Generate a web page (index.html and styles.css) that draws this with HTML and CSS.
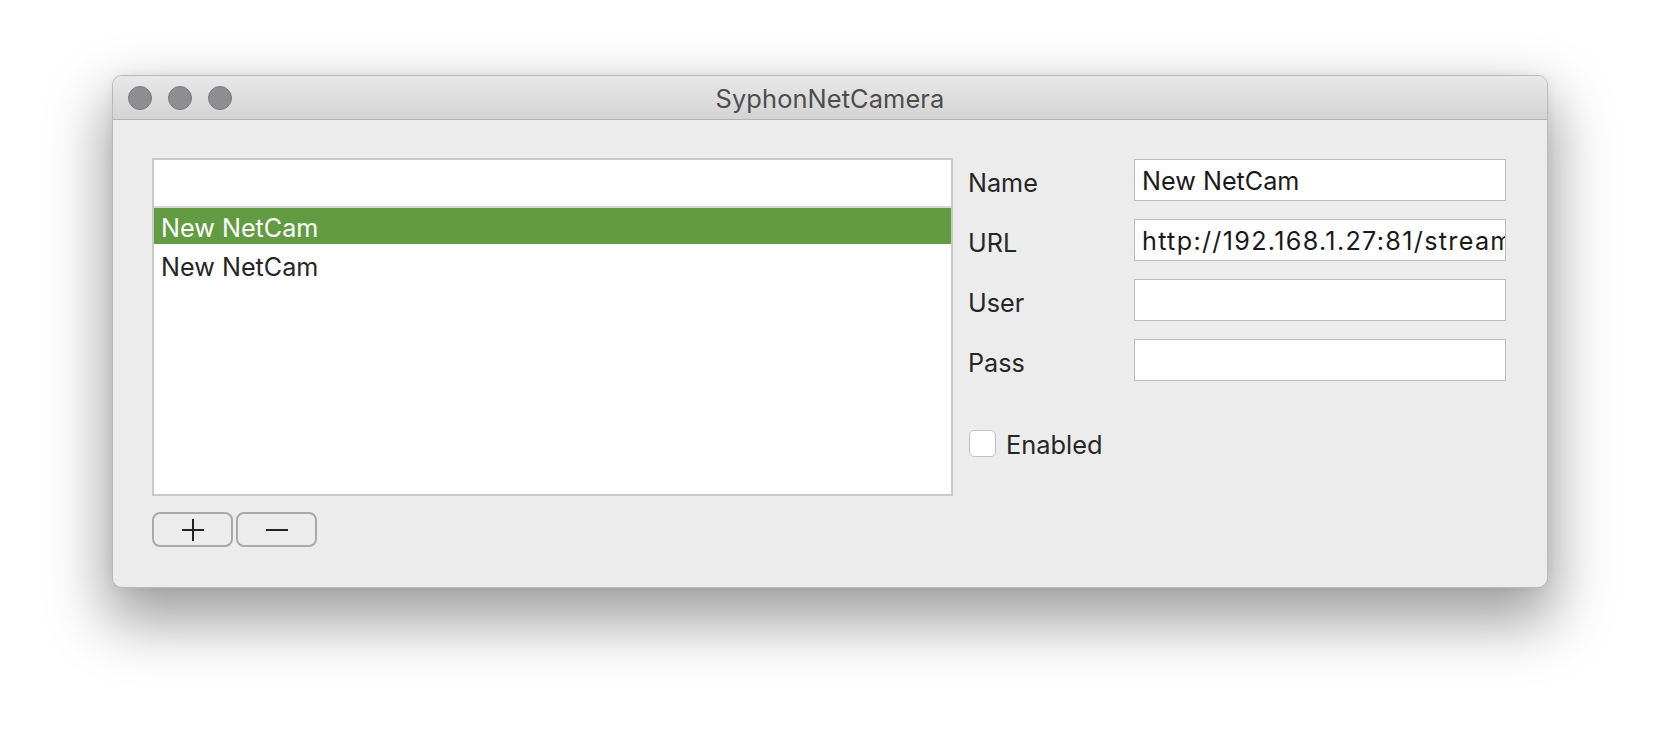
FILE: index.html
```html
<!DOCTYPE html>
<html lang="en">
<head>
<meta charset="utf-8">
<title>SyphonNetCamera</title>
<link rel="stylesheet" href="styles.css">
</head>
<body>
<div class="window">
  <div class="titlebar">
    <div class="lights">
      <span class="light"></span>
      <span class="light"></span>
      <span class="light"></span>
    </div>
    <div class="title">SyphonNetCamera</div>
  </div>
  <div class="content">
    <div class="left">
      <div class="list">
        <div class="list-header"></div>
        <div class="row selected">New NetCam</div>
        <div class="row">New NetCam</div>
      </div>
      <div class="buttons">
        <button class="btn" type="button"><span class="plus"></span></button>
        <button class="btn" type="button"><span class="minus"></span></button>
      </div>
    </div>
    <div class="right">
      <div class="form">
        <div class="label">Name</div>
        <div class="field">New NetCam</div>
        <div class="label">URL</div>
        <div class="field url">http://192.168.1.27:81/stream</div>
        <div class="label">User</div>
        <div class="field"></div>
        <div class="label">Pass</div>
        <div class="field"></div>
      </div>
      <label class="check">
        <span class="box"></span>
        <span class="check-text">Enabled</span>
      </label>
    </div>
  </div>
</div>
</body>
</html>
```
FILE: styles.css
```css
html, body {
  margin: 0;
  padding: 0;
}
body {
  width: 1660px;
  height: 736px;
  background: #ffffff;
  font-family: "Inter", "Liberation Sans", sans-serif;
  overflow: hidden;
}
.window {
  margin: 75px 0 0 112px;
  width: 1434px;
  height: 511px;
  border: 1px solid #b9b9b9;
  border-radius: 10px;
  background: #ececec;
  box-shadow: 0 28px 60px 6px rgba(0, 0, 0, 0.38), 0 0 12px rgba(0, 0, 0, 0.06);
  overflow: hidden;
  display: flex;
  flex-direction: column;
}
.titlebar {
  height: 43px;
  flex: none;
  display: flex;
  align-items: center;
  justify-content: center;
  position: relative;
  background: linear-gradient(#e9e8e9, #d3d3d3);
  border-bottom: 1px solid #b3b3b3;
}
.lights {
  position: absolute;
  left: 15px;
  top: 10px;
  display: flex;
  gap: 16px;
}
.light {
  width: 22px;
  height: 22px;
  border-radius: 50%;
  background: #8e8d92;
  border: 1px solid #7a797e;
}
.title {
  font-size: 25.4px;
  color: #4d4d4d;
  letter-spacing: 0.1px;
  padding-top: 1px;
}
.content {
  flex: 1;
  display: flex;
  padding: 38px 41px 0 39px;
  gap: 15px;
}
.left {
  width: 802px;
  display: flex;
  flex-direction: column;
  gap: 16px;
}
.list {
  height: 334px;
  border: 2px solid #c9c9c9;
  background: #ffffff;
}
.list-header {
  height: 46px;
  border-bottom: 2px solid #d6d6d6;
}
.row {
  height: 38px;
  line-height: 35px;
  padding: 4px 0 0 7px;
  box-sizing: border-box;
  font-size: 25.2px;
  color: #262626;
}
.row.selected {
  height: 35.5px;
  margin-bottom: 2.5px;
  padding-top: 3px;
  background: #629b42;
  color: #ffffff;
}
.buttons {
  display: flex;
  gap: 3px;
}
.btn {
  width: 81px;
  height: 35px;
  margin: 0;
  padding: 0;
  border: 2px solid #a9a9a9;
  border-radius: 8px;
  background: #ececec;
  display: flex;
  align-items: center;
  justify-content: center;
  position: relative;
}
.plus, .minus {
  display: block;
  width: 22px;
  height: 22px;
  position: relative;
}
.plus::before, .minus::before {
  content: "";
  position: absolute;
  left: 0;
  top: 10px;
  width: 22px;
  height: 2px;
  background: #222222;
}
.plus::after {
  content: "";
  position: absolute;
  left: 10px;
  top: 0;
  width: 2px;
  height: 22px;
  background: #222222;
}
.right {
  display: flex;
  flex-direction: column;
}
.form {
  display: grid;
  grid-template-columns: 166px 372px;
  grid-auto-rows: 42px;
  row-gap: 18px;
  margin-top: 1px;
}
.label {
  font-size: 25.2px;
  line-height: 42px;
  padding-top: 3px;
  color: #262626;
}
.field {
  box-sizing: border-box;
  border: 1.5px solid #bdbdbd;
  background: #ffffff;
  font-size: 25.2px;
  line-height: 37px;
  padding: 3px 0 0 7px;
  white-space: nowrap;
  overflow: hidden;
  color: #1a1a1a;
}
.field.url {
  letter-spacing: 1.3px;
}
.check {
  margin-top: 46px;
  display: flex;
  align-items: center;
  gap: 10px;
  padding-left: 1px;
}
.box {
  width: 25px;
  height: 25px;
  border: 1px solid #c2c2c2;
  border-radius: 5px;
  background: #ffffff;
}
.check-text {
  font-size: 25.4px;
  color: #262626;
  padding-top: 2px;
}
```
